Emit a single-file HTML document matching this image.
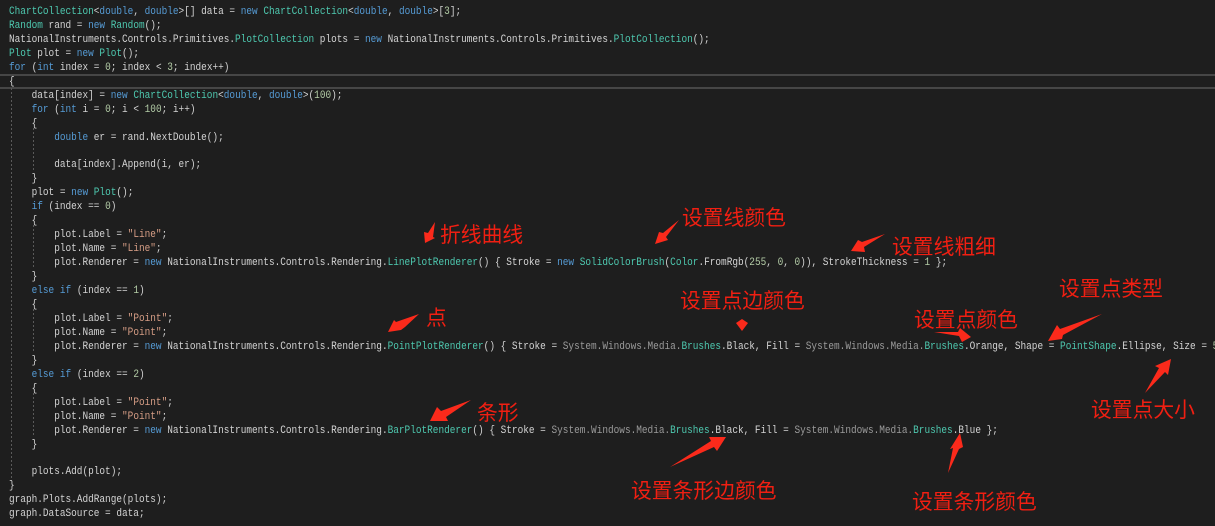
<!DOCTYPE html>
<html><head><meta charset="utf-8">
<style>
html,body{margin:0;padding:0;background:#1e1e1e;}
#r{position:relative;width:1215px;height:526px;overflow:hidden;background:#1e1e1e;}
pre{position:absolute;left:9px;top:6px;margin:0;font:11px/13.95px "Liberation Mono",monospace;color:#d4d4d4;white-space:pre;transform:scaleX(.856);transform-origin:0 0;}
.k{color:#569cd6}.t{color:#4ec9b0}.s{color:#d69d85}.n{color:#b5cea8}.g{color:#9b9b9b}
.l{position:absolute;font:20.8px/24px "Noto Sans CJK SC","WenQuanYi Zen Hei",sans-serif;color:#f01f12;white-space:nowrap;font-weight:400;}
.h{position:absolute;left:0;width:1215px;height:2px;background:#464646;}
svg{position:absolute;left:0;top:0;}
</style></head><body><div id="r">
<div class="h" style="top:74px"></div><div class="h" style="top:87px"></div>
<svg width="1215" height="526">
<g stroke="#5a5a5a" stroke-width="1" stroke-dasharray="2 2" fill="none">
<path d="M11.5 88V480M33.5 128V172M33.5 225V269M33.5 309V353M33.5 393V437"/>
</g>
<g fill="#fb2a1b">
<polygon points="435,222 433,237 435,238 425,243 424,232 428,233"/>
<polygon points="679,220 666,237 668,240 655,244 659,232 663,233"/>
<polygon points="885,234 864,247 865,252 851,251 858,240 862,242"/>
<polygon points="419,314 405,327 401,330 388,332 394,320 396,322"/>
<polygon points="742,319 748,323 742,331 736,323"/>
<polygon points="934,332 958,332 960,328 971,337 962,342 959,336"/>
<polygon points="1102,314 1063,335 1062,339 1048,341 1057,325 1060,329"/>
<polygon points="1145,393 1165,372 1168,375 1171,359 1155,366 1159,368"/>
<polygon points="471,400 446,417 448,421 430,421 437,407 441,411"/>
<polygon points="670,467 714,447 717,451 726,437 709,437 711,441"/>
<polygon points="948,473 959,449 963,447 960,433 950,449 953,448"/>
</g>
</svg>
<pre><span class="t">ChartCollection</span>&lt;<span class="k">double</span>, <span class="k">double</span>&gt;[] data = <span class="k">new</span> <span class="t">ChartCollection</span>&lt;<span class="k">double</span>, <span class="k">double</span>&gt;[<span class="n">3</span>];
<span class="t">Random</span> rand = <span class="k">new</span> <span class="t">Random</span>();
NationalInstruments.Controls.Primitives.<span class="t">PlotCollection</span> plots = <span class="k">new</span> NationalInstruments.Controls.Primitives.<span class="t">PlotCollection</span>();
<span class="t">Plot</span> plot = <span class="k">new</span> <span class="t">Plot</span>();
<span class="k">for</span> (<span class="k">int</span> index = <span class="n">0</span>; index &lt; <span class="n">3</span>; index++)
{
    data[index] = <span class="k">new</span> <span class="t">ChartCollection</span>&lt;<span class="k">double</span>, <span class="k">double</span>&gt;(<span class="n">100</span>);
    <span class="k">for</span> (<span class="k">int</span> i = <span class="n">0</span>; i &lt; <span class="n">100</span>; i++)
    {
        <span class="k">double</span> er = rand.NextDouble();

        data[index].Append(i, er);
    }
    plot = <span class="k">new</span> <span class="t">Plot</span>();
    <span class="k">if</span> (index == <span class="n">0</span>)
    {
        plot.Label = <span class="s">"Line"</span>;
        plot.Name = <span class="s">"Line"</span>;
        plot.Renderer = <span class="k">new</span> NationalInstruments.Controls.Rendering.<span class="t">LinePlotRenderer</span>() { Stroke = <span class="k">new</span> <span class="t">SolidColorBrush</span>(<span class="t">Color</span>.FromRgb(<span class="n">255</span>, <span class="n">0</span>, <span class="n">0</span>)), StrokeThickness = <span class="n">1</span> };
    }
    <span class="k">else</span> <span class="k">if</span> (index == <span class="n">1</span>)
    {
        plot.Label = <span class="s">"Point"</span>;
        plot.Name = <span class="s">"Point"</span>;
        plot.Renderer = <span class="k">new</span> NationalInstruments.Controls.Rendering.<span class="t">PointPlotRenderer</span>() { Stroke = <span class="g">System.Windows.Media.</span><span class="t">Brushes</span>.Black, Fill = <span class="g">System.Windows.Media.</span><span class="t">Brushes</span>.Orange, Shape = <span class="t">PointShape</span>.Ellipse, Size = <span class="n">5</span> };
    }
    <span class="k">else</span> <span class="k">if</span> (index == <span class="n">2</span>)
    {
        plot.Label = <span class="s">"Point"</span>;
        plot.Name = <span class="s">"Point"</span>;
        plot.Renderer = <span class="k">new</span> NationalInstruments.Controls.Rendering.<span class="t">BarPlotRenderer</span>() { Stroke = <span class="g">System.Windows.Media.</span><span class="t">Brushes</span>.Black, Fill = <span class="g">System.Windows.Media.</span><span class="t">Brushes</span>.Blue };
    }

    plots.Add(plot);
}
graph.Plots.AddRange(plots);
graph.DataSource = data;</pre>
<span class="l" style="left:440px;top:221px">折线曲线</span>
<span class="l" style="left:682px;top:204px">设置线颜色</span>
<span class="l" style="left:892px;top:233px">设置线粗细</span>
<span class="l" style="left:426px;top:304px">点</span>
<span class="l" style="left:680px;top:287px">设置点边颜色</span>
<span class="l" style="left:914px;top:306px">设置点颜色</span>
<span class="l" style="left:1059px;top:275px">设置点类型</span>
<span class="l" style="left:1091px;top:396px">设置点大小</span>
<span class="l" style="left:477px;top:399px">条形</span>
<span class="l" style="left:631px;top:477px">设置条形边颜色</span>
<span class="l" style="left:912px;top:488px">设置条形颜色</span>
</div></body></html>
